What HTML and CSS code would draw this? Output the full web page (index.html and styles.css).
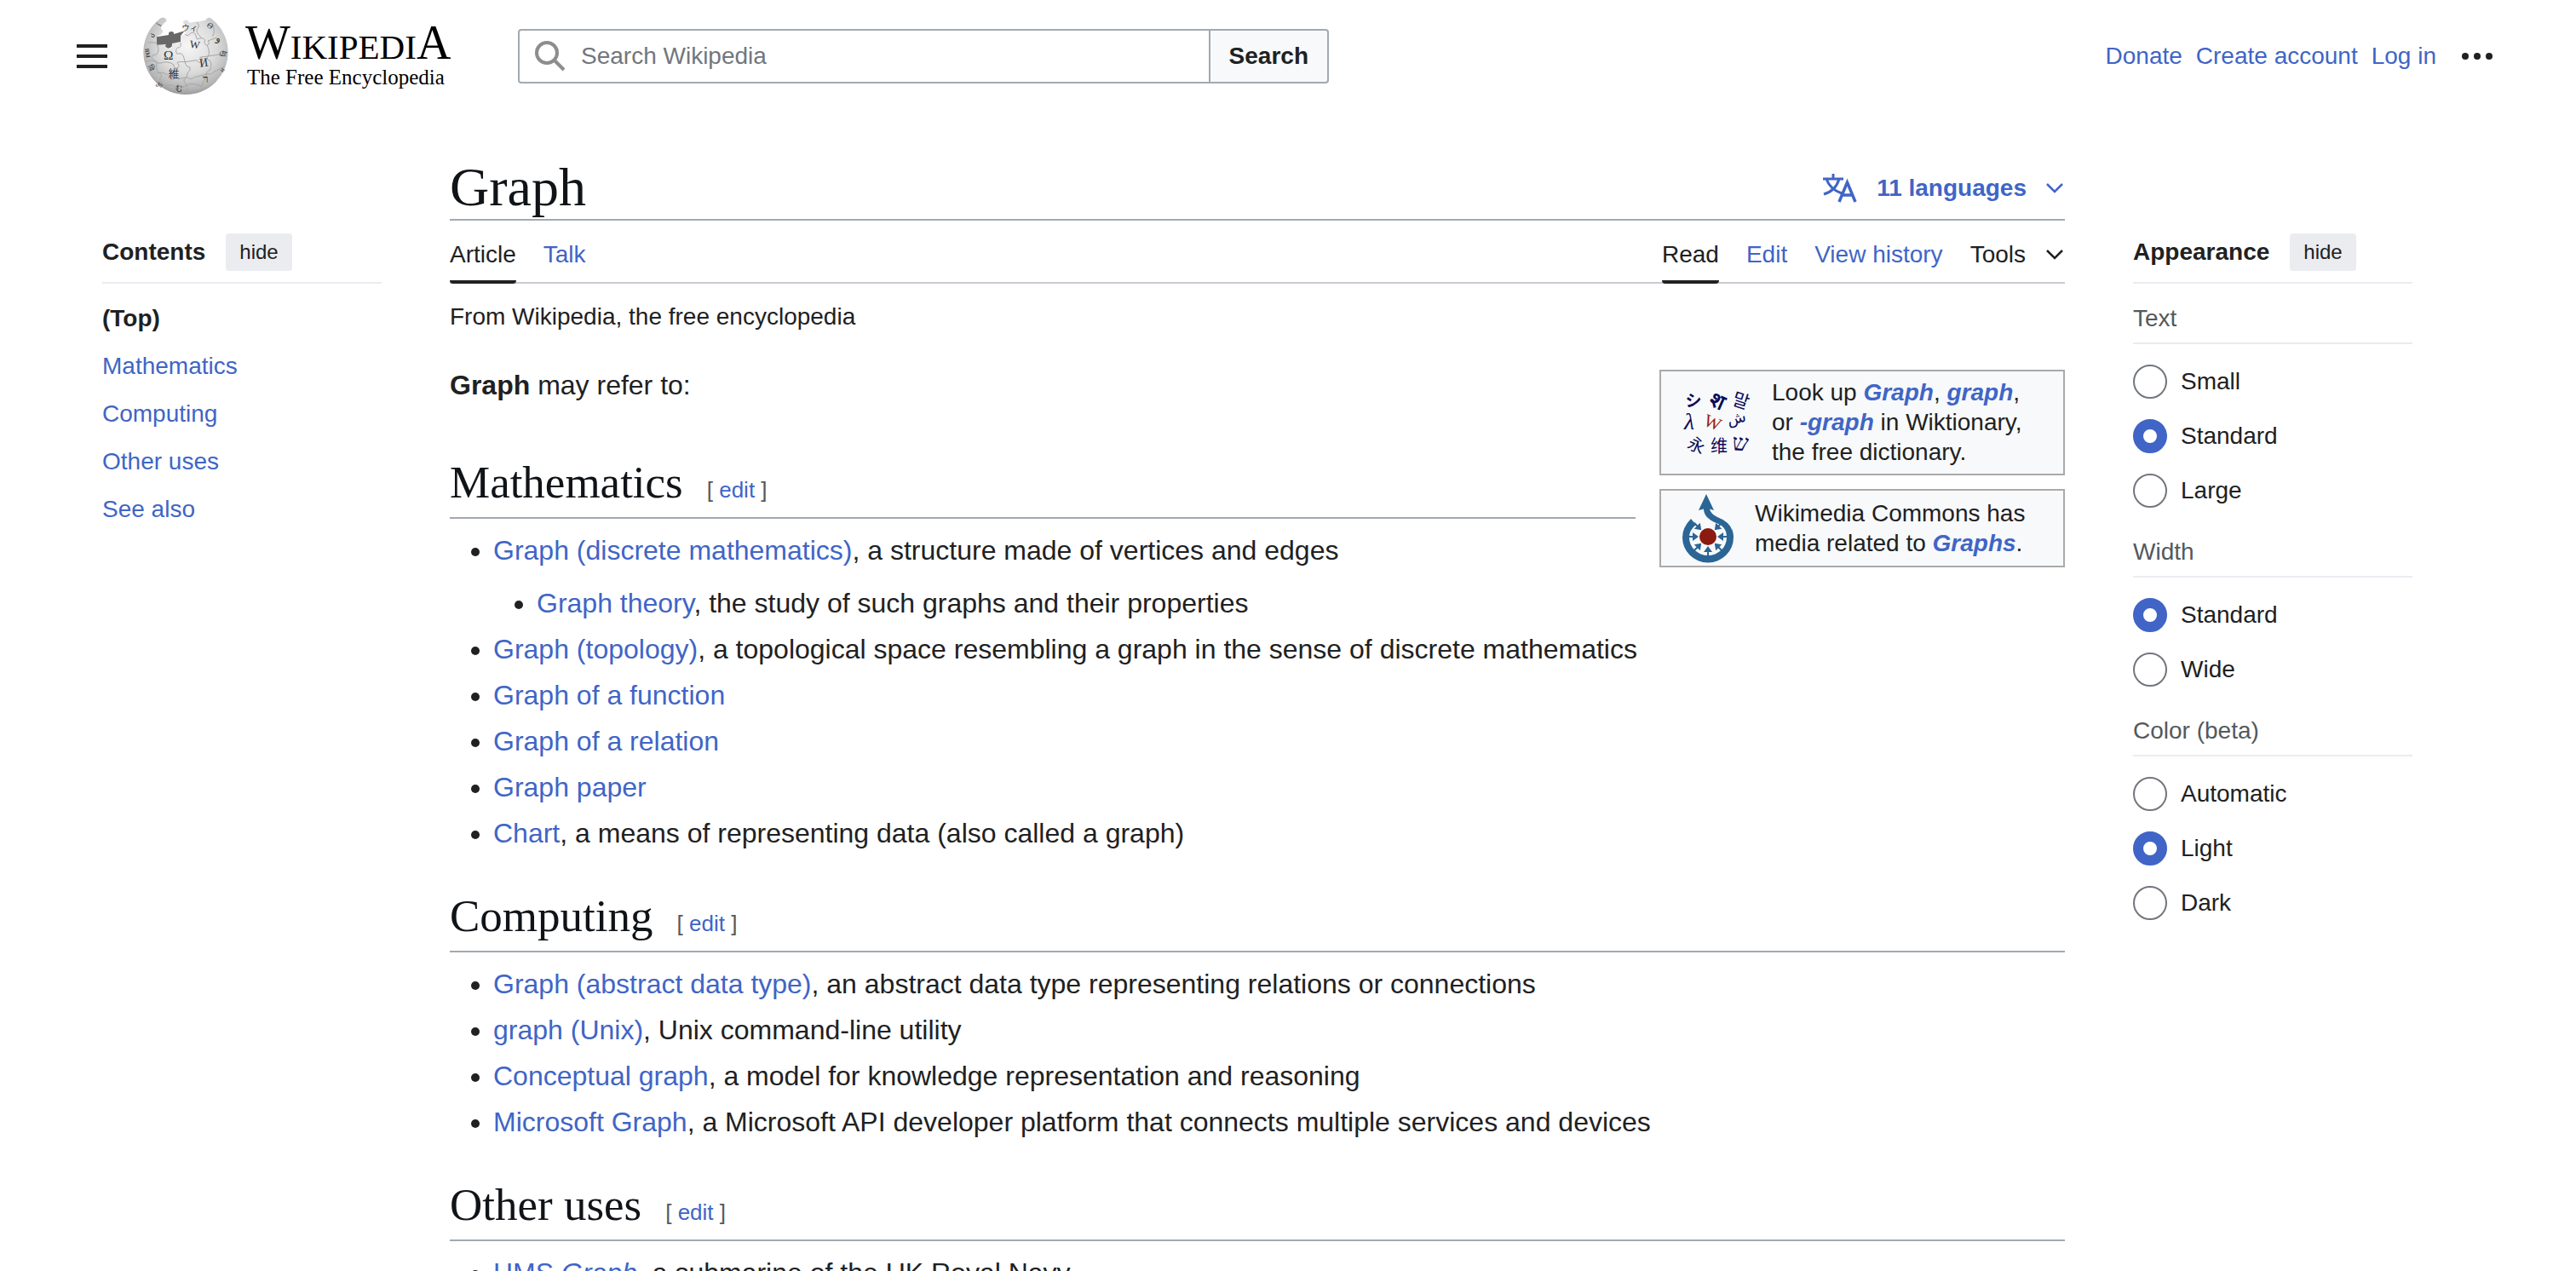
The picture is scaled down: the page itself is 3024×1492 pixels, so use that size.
FILE: index.html
```html
<!DOCTYPE html>
<html lang="en">
<head>
<meta charset="utf-8">
<title>Graph - Wikipedia</title>
<link rel="stylesheet" href="styles.css">
</head>
<body>
<header class="site-header">
  <button class="icon-button menu-button" type="button" aria-label="Main menu">
    <svg width="36" height="28" viewBox="0 0 36 28" fill="#202122"><path d="M0 0h36v4H0zM0 12h36v4H0zM0 24h36v4H0z"/></svg>
  </button>
  <a class="logo" href="#">
    <svg class="globe" width="100" height="92" viewBox="322 58 300 276" aria-hidden="true">
      <defs>
        <radialGradient id="ball" cx="0.52" cy="0.36" r="0.66">
          <stop offset="0" stop-color="#f6f6f6"/><stop offset="0.5" stop-color="#dcdcdc"/><stop offset="0.82" stop-color="#b4b4b4"/><stop offset="1" stop-color="#858585"/>
        </radialGradient>
        <clipPath id="ballclip"><circle cx="472" cy="182" r="149"/></clipPath>
      </defs>
      <path clip-path="url(#ballclip)" fill="url(#ball)" d="M404 66L396 60L320 60V340H624V60H556Q544 60 542 70L483 78Q484 68 473 69Q461 70 463 80L470 84L466 108Q478 118 466 124Q454 118 453 124L454 145L427 150Q426 154 424 164Q418 172 408 169Q399 166 400 156L375 152Q368 140 372 126L384 120Q398 108 386 100Q382 90 392 84Q396 78 404 74Z"/>
      <path d="M370 128L412 121Q410 109 422 109Q432 110 430 118L468 107L454 124V145L424 151Q427 166 410 168Q396 164 402 154L370 156Z" fill="#686868"/>
      <g fill="none" stroke="#a6a6a6" stroke-width="3" clip-path="url(#ballclip)">
        <path d="M340 148Q360 146 372 150M330 214Q350 206 368 216Q376 224 392 218T430 226Q428 240 442 238Q454 230 444 222T470 216L512 210Q518 224 530 214Q534 202 522 200L590 190"/>
        <path d="M372 158Q382 176 368 190Q352 190 352 202Q362 212 370 216Q366 240 374 254Q390 258 386 270Q374 278 392 296"/>
        <path d="M454 148Q458 166 444 166Q432 174 442 188Q458 182 464 196L470 216Q472 234 486 234Q492 246 480 252L474 272Q460 280 470 290T474 332"/>
        <path d="M468 118Q480 128 488 116Q500 108 506 118L512 136Q534 128 540 138Q534 152 546 158Q560 152 550 142L582 130"/>
        <path d="M510 76Q524 88 514 98T526 130M566 80Q578 110 566 126M548 158Q558 180 552 194Q542 208 556 210Q566 220 558 244Q540 252 546 262L528 300"/>
        <path d="M372 254Q392 250 410 262M420 278Q436 268 448 276L478 270Q490 282 502 270L550 258Q562 264 570 252L608 232M394 300Q420 292 432 304T470 300T530 304"/>
      </g>
      <g class="globe-glyphs" text-anchor="middle">
        <text x="411" y="208" font-size="46">Ω</text><text x="504" y="168" font-size="38" transform="rotate(8 504 160)">W</text>
        <text x="536" y="232" font-size="42" transform="rotate(-8 536 220)">И</text><text x="430" y="271" font-size="38">維</text>
        <text x="542" y="290" font-size="40">ר</text><text x="486" y="106" font-size="28">ウィ</text>
        <text x="588" y="144" font-size="34" transform="rotate(12 588 132)">و</text><text x="558" y="98" font-size="28" transform="rotate(35 558 88)">Ѳ</text>
        <text x="448" y="318" font-size="26">む</text><text x="346" y="192" font-size="30" transform="rotate(80 342 180)">ям</text>
        <text x="348" y="246" font-size="26" transform="rotate(62 348 238)">वि</text><text x="606" y="196" font-size="26" transform="rotate(-80 606 186)">वि</text>
        <text x="356" y="132" font-size="28" transform="rotate(-40 354 124)">ა</text><text x="380" y="92" font-size="28" transform="rotate(-60 380 86)">í</text>
        <text x="382" y="302" font-size="22" transform="rotate(35 382 294)">ვი</text><text x="600" y="252" font-size="24" transform="rotate(-55 600 244)">и</text>
      </g>
    </svg>
    <span class="logo-text">
      <span class="wordmark"><span class="wordmark-cap">W</span>IKIPEDI<span class="wordmark-cap">A</span></span>
      <span class="tagline">The Free Encyclopedia</span>
    </span>
  </a>
  <form class="search" role="search">
    <label class="search-box">
      <svg width="36" height="36" viewBox="0 0 36 36" fill="none" stroke="#8d8d8d" stroke-width="4"><circle cx="14" cy="14" r="12"/><path d="M22.500 22.500L34 34"/></svg>
      <input class="search-input" type="search" placeholder="Search Wikipedia" aria-label="Search Wikipedia">
    </label>
    <button class="search-button" type="submit">Search</button>
  </form>
  <nav class="user-links" aria-label="Personal tools">
    <a href="#">Donate</a>
    <a href="#">Create account</a>
    <a href="#">Log in</a>
    <button class="icon-button more-button" type="button" aria-label="More options">
      <svg width="36" height="8" viewBox="0 0 36 8" fill="#202122"><circle cx="4" cy="4" r="4"/><circle cx="18" cy="4" r="4"/><circle cx="32" cy="4" r="4"/></svg>
    </button>
  </nav>
</header>

<div class="page">
  <nav class="sidebar" aria-label="Contents">
    <div class="sidebar-head"><h2 class="sidebar-title">Contents</h2><button class="hide-button" type="button">hide</button></div>
    <ul class="toc">
      <li><a class="toc-current" href="#">(Top)</a></li>
      <li><a href="#mathematics">Mathematics</a></li>
      <li><a href="#computing">Computing</a></li>
      <li><a href="#other-uses">Other uses</a></li>
      <li><a href="#see-also">See also</a></li>
    </ul>
  </nav>

  <main class="article">
    <div class="title-row">
      <h1 class="title">Graph</h1>
      <button class="languages" type="button">
        <svg class="language-icon" width="40" height="34" viewBox="0 0 40 34" fill="none" stroke="currentColor" stroke-width="3"><path d="M0 6h24M12 0v6M4 6Q8 18 22 23M19 6Q15 20 1 24"/><path d="M19 33L28.500 10L38 33M22 25h13" stroke-width="3.500"/></svg>
        <span>11 languages</span>
        <svg class="chevron" width="20" height="12" viewBox="0 0 20 12" fill="none" stroke="currentColor" stroke-width="2.500"><path d="M1 1l9 9l9-9"/></svg>
      </button>
    </div>
    <div class="tabs">
      <nav class="tab-group tab-group-page" aria-label="Namespaces">
        <a class="tab tab-active" href="#">Article</a>
        <a class="tab" href="#">Talk</a>
      </nav>
      <nav class="tab-group tab-group-views" aria-label="Views">
        <a class="tab tab-active" href="#">Read</a>
        <a class="tab" href="#">Edit</a>
        <a class="tab" href="#">View history</a>
        <button class="tab tools" type="button">Tools
          <svg class="chevron" width="20" height="12" viewBox="0 0 20 12" fill="none" stroke="currentColor" stroke-width="2.500"><path d="M1 1l9 9l9-9"/></svg>
        </button>
      </nav>
    </div>
    <p class="site-sub">From Wikipedia, the free encyclopedia</p>

    <div class="body">
      <aside class="sister-links">
        <div class="sister-box">
          <svg class="wiktionary-icon" width="80" height="76" viewBox="0 0 80 76" text-anchor="middle" aria-hidden="true">
            <g fill="#0b0b58">
            <text x="13" y="19" font-size="19" font-weight="700">シ</text><text x="41" y="21" font-size="25" font-weight="700" transform="rotate(24 41 12)">श</text>
            <text x="69" y="20" font-size="21" transform="rotate(18 69 12)">말</text><text x="8" y="46" font-size="28" font-style="italic">λ</text>
            <text x="64" y="39" font-size="18" transform="rotate(-12 63 37)">ش</text><text x="17" y="72" font-size="20" transform="rotate(24 17 64)">永</text>
            <text x="43" y="73" font-size="20">维</text><text x="68" y="71" font-size="27" transform="rotate(4 68 64)">ש</text>
            </g>
            <text x="36" y="45" font-size="21" fill="#9a1c14" transform="rotate(22 36 37)">W</text>
          </svg>
          <p>Look up <a href="#"><b><i>Graph</i></b></a>, <a href="#"><b><i>graph</i></b></a>,<br>or <a href="#"><b><i>-graph</i></b></a> in Wiktionary,<br>the free dictionary.</p>
        </div>
        <div class="sister-box">
          <svg class="commons-icon" width="60" height="80" viewBox="0 0 60 80" aria-hidden="true">
            <path d="M28 0L37 19L32 17.500Q33 23 41 27Q60 34 60 51A30 29.500 0 0 1 0 51Q0 39 10 29L16 36Q8 42 8 51A22 21 0 0 0 52 51Q52 38 40 34Q25 28 25 17.500L19 19Z" fill="#2a6596"/>
            <circle cx="30" cy="50" r="10" fill="#8b1a10"/>
            <g fill="#2a6596">
              <path id="spoke" d="M7 49h5V45l7 5l-7 5v-4h-5z"/>
              <use href="#spoke" transform="rotate(45 30 50)"/><use href="#spoke" transform="rotate(135 30 50)"/><use href="#spoke" transform="rotate(180 30 50)"/>
              <use href="#spoke" transform="rotate(225 30 50)"/><use href="#spoke" transform="rotate(270 30 50)"/><use href="#spoke" transform="rotate(315 30 50)"/>
            </g>
          </svg>
          <p>Wikimedia Commons has<br>media related to <a href="#"><b><i>Graphs</i></b></a>.</p>
        </div>
      </aside>

      <p class="lead"><b>Graph</b> may refer to:</p>

      <div class="section-head" id="mathematics"><h2>Mathematics</h2><span class="edit">[ <a href="#">edit</a> ]</span></div>
      <ul>
        <li><a href="#">Graph (discrete mathematics)</a>, a structure made of vertices and edges
          <ul>
            <li><a href="#">Graph theory</a>, the study of such graphs and their properties</li>
          </ul>
        </li>
        <li><a href="#">Graph (topology)</a>, a topological space resembling a graph in the sense of discrete mathematics</li>
        <li><a href="#">Graph of a function</a></li>
        <li><a href="#">Graph of a relation</a></li>
        <li><a href="#">Graph paper</a></li>
        <li><a href="#">Chart</a>, a means of representing data (also called a graph)</li>
      </ul>

      <div class="section-head" id="computing"><h2>Computing</h2><span class="edit">[ <a href="#">edit</a> ]</span></div>
      <ul>
        <li><a href="#">Graph (abstract data type)</a>, an abstract data type representing relations or connections</li>
        <li><a href="#">graph (Unix)</a>, Unix command-line utility</li>
        <li><a href="#">Conceptual graph</a>, a model for knowledge representation and reasoning</li>
        <li><a href="#">Microsoft Graph</a>, a Microsoft API developer platform that connects multiple services and devices</li>
      </ul>

      <div class="section-head" id="other-uses"><h2>Other uses</h2><span class="edit">[ <a href="#">edit</a> ]</span></div>
      <ul>
        <li><a href="#">HMS <i>Graph</i></a>, a submarine of the UK Royal Navy</li>
      </ul>
    </div>
  </main>

  <aside class="sidebar" aria-label="Appearance">
    <div class="sidebar-head"><h2 class="sidebar-title">Appearance</h2><button class="hide-button" type="button">hide</button></div>
    <form class="appearance">
      <fieldset class="option-group">
        <legend>Text</legend>
        <label class="option"><input type="radio" name="text">Small</label>
        <label class="option"><input type="radio" name="text" checked>Standard</label>
        <label class="option"><input type="radio" name="text">Large</label>
      </fieldset>
      <fieldset class="option-group">
        <legend>Width</legend>
        <label class="option"><input type="radio" name="width" checked>Standard</label>
        <label class="option"><input type="radio" name="width">Wide</label>
      </fieldset>
      <fieldset class="option-group">
        <legend>Color (beta)</legend>
        <label class="option"><input type="radio" name="color">Automatic</label>
        <label class="option"><input type="radio" name="color" checked>Light</label>
        <label class="option"><input type="radio" name="color">Dark</label>
      </fieldset>
    </form>
  </aside>
</div>
</body>
</html>
```
FILE: styles.css
```css
:root {
  --link: #4065c6;
  --text: #202122;
  --subtle: #54595d;
  --line: #a2a9b1;
  --line-soft: #eaecf0;
  --serif: "Liberation Serif", "Noto Sans CJK JP", serif;
}

* {
  box-sizing: border-box;
}

body {
  margin: 0;
  background: #fff;
  color: var(--text);
  font: 28px/36px "Liberation Sans", Arial, sans-serif;
}

a {
  color: var(--link);
  text-decoration: none;
}

h1, h2, p, ul {
  margin: 0;
  padding: 0;
  font-weight: 400;
}

button, input {
  font: inherit;
  color: inherit;
}

svg {
  display: block;
  flex: none;
  overflow: visible;
}

.icon-button {
  padding: 0;
  border: 0;
  background: none;
}

/* Header */

.site-header {
  display: flex;
  align-items: center;
  height: 132px;
  padding: 0 98px 0 90px;
}

.logo {
  display: flex;
  align-items: center;
  gap: 20px;
  margin-left: 42px;
  color: #000;
  font-family: var(--serif);
}

.logo-text {
  display: flex;
  flex-direction: column;
  width: 240px;
  white-space: nowrap;
}

.wordmark {
  font-size: 41px;
  line-height: 44px;
}

.wordmark-cap {
  font-size: 56px;
}

.tagline {
  padding-left: 2px;
  font-size: 25px;
  line-height: 28px;
}

.globe-glyphs {
  fill: #333;
  font-family: var(--serif);
}

.search {
  display: flex;
  flex: 0 1 952px;
  height: 64px;
  margin-left: 80px;
}

.search-box {
  display: flex;
  flex: 1;
  align-items: center;
  gap: 18px;
  padding-left: 18px;
  border: 2px solid var(--line);
  border-radius: 4px 0 0 4px;
}

.search-input {
  flex: 1;
  min-width: 0;
  padding: 0;
  border: 0;
  outline: 0;
  background: none;
}

.search-input::placeholder {
  color: #72777d;
  opacity: 1;
}

.search-button {
  margin-left: -2px;
  padding: 0 22px;
  border: 2px solid var(--line);
  border-radius: 0 4px 4px 0;
  background: #f8f9fa;
  font-weight: 700;
}

.user-links {
  display: flex;
  align-items: center;
  gap: 16px;
  margin-left: auto;
}

.more-button {
  margin-left: 14px;
}

/* Columns */

.page {
  display: grid;
  grid-template-columns: 328px minmax(0, 1fr) 328px;
  column-gap: 80px;
  padding: 45px 192px 0 120px;
}

.article {
  min-width: 0;
}

.sidebar {
  padding-top: 97px;
}

.sidebar-head {
  display: flex;
  align-items: center;
  gap: 24px;
  padding-bottom: 13px;
  border-bottom: 2px solid var(--line-soft);
}

.sidebar-title {
  font-size: 28px;
  font-weight: 700;
}

.hide-button {
  height: 44px;
  padding: 0 16px;
  border: 0;
  border-radius: 4px;
  background: var(--line-soft);
  font-size: 24px;
}

.toc {
  display: grid;
  gap: 20px;
  padding-top: 23px;
  list-style: none;
}

.toc-current {
  color: var(--text);
  font-weight: 700;
}

/* Article head */

.title-row {
  display: flex;
  align-items: center;
  justify-content: space-between;
  border-bottom: 2px solid var(--line);
}

.title {
  padding-top: 6px;
  color: #101418;
  font-family: var(--serif);
  font-size: 64px;
  line-height: 74px;
}

.languages {
  display: flex;
  align-items: center;
  gap: 23px;
  padding: 7px 2px 0 0;
  border: 0;
  background: none;
  color: var(--link);
  font-weight: 700;
}

.tabs {
  display: flex;
  justify-content: space-between;
  border-bottom: 2px solid #c8ccd1;
}

.tab-group {
  display: flex;
  gap: 32px;
  margin-bottom: -2px;
}

.tab {
  padding: 22px 0 12px;
  border: 0 solid transparent;
  border-bottom-width: 4px;
  background: none;
}

.tab-active {
  border-color: var(--text);
  border-radius: 0 0 4px 4px;
  color: var(--text);
}

.tools {
  display: flex;
  align-items: center;
  gap: 24px;
  padding-right: 2px;
}

.site-sub {
  margin-top: 21px;
}

/* Article body */

.body {
  padding-top: 37px;
  font-size: 32px;
  line-height: 51px;
}

.lead {
  margin-bottom: 51px;
}

.section-head {
  display: flex;
  align-items: baseline;
  gap: 28px;
  margin-top: 34px;
  padding-bottom: 8px;
  border-bottom: 2px solid var(--line);
}

.section-head h2 {
  padding-top: 4px;
  color: #101418;
  font-family: var(--serif);
  font-size: 53px;
  line-height: 66px;
}

.edit {
  color: var(--subtle);
  font-size: 26px;
  line-height: 36px;
}

.body ul {
  margin-top: 12px;
  padding-left: 51px;
  list-style: disc;
}

.body ul ul {
  margin-top: 11px;
}

.body li {
  margin-bottom: 3px;
}

/* Boxes linking to the sister projects */

.sister-links {
  display: grid;
  float: right;
  gap: 16px;
  width: 476px;
  margin: 7px 0 16px 28px;
  font-size: 28px;
  line-height: 35px;
}

.sister-box {
  display: flex;
  align-items: center;
  gap: 25px;
  padding: 4px 25px;
  border: 2px solid #aaa;
  background: #f8f9fa;
}

.sister-box p {
  padding: 3px 0 4px;
}

.wiktionary-icon {
  font-family: var(--serif);
}

/* Appearance panel */

.option-group {
  display: grid;
  gap: 24px;
  min-width: 0;
  margin: 0;
  padding: 0;
  border: 0;
}

.appearance {
  display: grid;
  gap: 34px;
  padding-top: 23px;
}

.option-group legend {
  width: 100%;
  margin-bottom: 24px;
  padding: 0 0 10px;
  border-bottom: 2px solid var(--line-soft);
  color: var(--subtle);
}

.option {
  display: flex;
  align-items: center;
  gap: 16px;
  height: 40px;
}

.option input {
  appearance: none;
  width: 40px;
  height: 40px;
  margin: 0;
  border: 2px solid #72777d;
  border-radius: 50%;
  background: #fff;
}

.option input:checked {
  border: 12px solid var(--link);
}
```
